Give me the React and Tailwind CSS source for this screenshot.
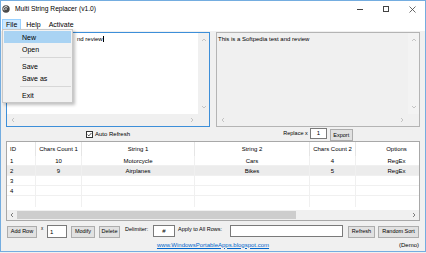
import React from 'react'

// small chevron used by the scrollbars
const Arrow = ({ dir, className = '' }) => {
  const pts = {
    up: '1,4 3,2 5,4',
    down: '1,2 3,4 5,2',
    left: '4,1 2,3 4,5',
    right: '2,1 4,3 2,5',
  }[dir]
  return (
    <svg width="6" height="6" viewBox="0 0 6 6" className={className}>
      <polyline points={pts} fill="none" stroke="currentColor" strokeWidth="0.8" />
    </svg>
  )
}

const TextBox = ({ focused, readOnly, children }) => (
  <div
    className={`relative w-[204px] h-[95px] border flex flex-col ${
      focused ? 'border-[#3d8fd9] bg-white' : 'border-[#b4b4b4] bg-[#f0f0f0]'
    }`}
  >
    <div className="flex flex-1">
      <div className="flex-1 pl-[1px] pt-[3px] text-[6px] leading-[7px] text-black whitespace-nowrap overflow-hidden">
        {children}
      </div>
      <div className={`w-[11px] flex flex-col items-center justify-between py-[4px] ${readOnly ? 'bg-[#f3f3f3]' : 'bg-[#f0f0f0]'} text-[#b8b8b8]`}>
        <Arrow dir="up" />
        <Arrow dir="down" />
      </div>
    </div>
    <div className="h-[12px] flex">
      <div className="flex-1 flex items-center justify-between px-[3px] bg-[#f0f0f0] text-[#b8b8b8]">
        <Arrow dir="left" />
        <Arrow dir="right" />
      </div>
      <div className="w-[11px] bg-[#f0f0f0]" />
    </div>
  </div>
)

const Btn = ({ w, className = '', children }) => (
  <div
    className={`${w} h-[12px] mt-[1px] bg-[#e1e1e1] border border-[#adadad] flex items-center justify-center text-[5.5px] text-black ${className}`}
  >
    {children}
  </div>
)

const cols = 'grid grid-cols-[29px_46px_113px_115px_46px_82px] w-[431px]'

const rows = [
  ['1', '10', 'Motorcycle', 'Cars', '4', 'RegEx'],
  ['2', '9', 'Airplanes', 'Bikes', '5', 'RegEx'],
  ['3', '', '', '', '', ''],
  ['4', '', '', '', '', ''],
]

const headers = ['ID', 'Chars Count 1', 'String 1', 'String 2', 'Chars Count 2', 'Options']

export default function App() {
  return (
    <div className="w-[426px] h-[253px] bg-[#f0f0f0] overflow-hidden font-['Liberation_Sans',Arial,sans-serif] text-black">
      <div className="relative w-[426px] h-[252px] border border-[#74ade0] bg-[#f0f0f0] flex flex-col">
        {/* title bar */}
        <div className="h-[16px] bg-white flex items-center">
          <svg width="8" height="8" viewBox="0 0 8 8" className="ml-[1px]">
            <circle cx="4" cy="4" r="3.7" fill="#4a4a4a" />
            <path d="M2.2 5.3 A2.2 2.2 0 0 1 5.6 2.4" fill="none" stroke="#fff" strokeWidth="0.9" />
            <circle cx="4" cy="4" r="0.8" fill="#fff" />
          </svg>
          <span className="ml-[5px] text-[6.7px] leading-none">Multi String Replacer (v1.0)</span>
          <div className="ml-auto flex h-full">
            <div className="w-[26px] flex items-center justify-center">
              <div className="w-[6px] h-[1px] bg-[#444]" />
            </div>
            <div className="w-[26px] flex items-center justify-center">
              <div className="w-[6px] h-[6px] border border-[#444]" />
            </div>
            <div className="w-[26px] flex items-center justify-center">
              <svg width="7" height="7" viewBox="0 0 7 7">
                <path d="M0.5 0.5 L6.5 6.5 M6.5 0.5 L0.5 6.5" stroke="#444" strokeWidth="0.8" />
              </svg>
            </div>
          </div>
        </div>

        {/* menu bar */}
        <div className="h-[14px] bg-white flex items-center text-[7px] leading-none">
          <div className="ml-[1px] h-[11px] px-[3px] flex items-center bg-[#cce8ff] border border-[#99d1ff]">File</div>
          <span className="ml-[5px]">Help</span>
          <span className="ml-[8px]">Activate</span>
        </div>

        {/* content */}
        <div className="flex-1 px-[5px] pt-[1px] flex flex-col">
          <div className="flex gap-[6px]">
            <TextBox focused>
              <span className="pl-[69px]">nd review</span>
              <span className="inline-block w-[0.5px] h-[6px] bg-black align-middle" />
            </TextBox>
            <TextBox readOnly>This is a Softpedia test and review</TextBox>
          </div>

          <div className="h-[14px] flex">
            <div className="w-[204px] flex items-center justify-center">
              <div className="w-[7px] h-[7px] border border-[#333] bg-white flex items-center justify-center">
                <svg width="5" height="5" viewBox="0 0 5 5">
                  <polyline points="0.6,2.6 1.9,3.9 4.4,1" fill="none" stroke="#222" strokeWidth="0.8" />
                </svg>
              </div>
              <span className="ml-[2px] text-[6px] leading-none">Auto Refresh</span>
            </div>
            <div className="ml-[6px] w-[204px] flex items-start justify-center pt-[1px]">
              <span className="mt-[3px] text-[5.5px] leading-none">Replace x</span>
              <div className="ml-[2px] w-[17px] h-[11px] bg-white border border-[#7a7a7a] flex items-center pl-[6px] text-[6px]">1</div>
              <Btn w="w-[23px]" className="ml-[3px]">Export</Btn>
            </div>
          </div>

          {/* list view */}
          <div className="h-[80px] border border-[#a8a8a8] bg-white flex flex-col overflow-hidden">
            <div className={`${cols} h-[14px] text-[6px] leading-none`}>
              {headers.map((h, i) => (
                <div
                  key={h}
                  className={`border-r border-[#e5e5e5] flex items-center ${i === 0 ? 'justify-start pl-[3px]' : 'justify-center'}`}
                >
                  {h}
                </div>
              ))}
            </div>
            {rows.map((r, ri) => (
              <div
                key={ri}
                className={`${cols} h-[10px] text-[6px] leading-none border-b border-[#f0f0f0] ${ri === 1 ? 'bg-[#ececec]' : ''}`}
              >
                {r.map((c, ci) => (
                  <div
                    key={ci}
                    className={`border-r border-[#f0f0f0] flex items-center ${ci === 0 ? 'justify-start pl-[3px]' : 'justify-center'}`}
                  >
                    {c}
                  </div>
                ))}
              </div>
            ))}
            <div className={`${cols} h-[14px]`}>
              {headers.map((h) => (
                <div key={h} className="border-r border-[#f0f0f0] mb-[3px]" />
              ))}
            </div>
            <div className="h-[10px] flex items-center bg-[#f0f0f0] text-[#606060]">
              <div className="w-[10px] flex justify-center"><Arrow dir="left" /></div>
              <div className="flex-1 h-full flex items-center">
                <div className="w-[279px] h-[8px] bg-[#cdcdcd]" />
              </div>
              <div className="w-[10px] flex justify-center"><Arrow dir="right" /></div>
            </div>
          </div>

          {/* action row */}
          <div className="mt-[4px] h-[13px] flex items-start text-[5.5px] leading-none">
            <Btn w="w-[30px]" className="ml-[1px]">Add Row</Btn>
            <span className="ml-[4px] mt-[2px] w-[3px] text-[4.5px]">x</span>
            <div className="ml-[3px] w-[20px] h-[13px] bg-white border border-[#7a7a7a] flex items-center pl-[2px] text-[6px]">1</div>
            <Btn w="w-[24px]" className="ml-[4px]">Modify</Btn>
            <Btn w="w-[21px]" className="ml-[4px]">Delete</Btn>
            <span className="ml-[5px] mt-[2px] w-[26px]">Delimiter:</span>
            <div className="ml-[2px] w-[22px] h-[12px] bg-white border border-[#7a7a7a] flex items-center justify-center text-[6px]">#</div>
            <span className="ml-[3px] mt-[2px] w-[50px]">Apply to All Rows:</span>
            <div className="ml-[2px] w-[113px] h-[12px] bg-white border border-[#7a7a7a]" />
            <Btn w="w-[27px]" className="ml-[5px]">Refresh</Btn>
            <Btn w="w-[41px]" className="ml-[3px]">Random Sort</Btn>
          </div>

          {/* footer */}
          <div className="h-[13px] grid grid-cols-[1fr_auto_1fr] items-center text-[6px] leading-none">
            <div />
            <span className="text-[#0066cc] underline">www.WindowsPortableApps.blogspot.com</span>
            <span className="justify-self-end mr-[1px]">(Demo)</span>
          </div>
        </div>

        {/* File dropdown */}
        <div className="absolute left-[1px] top-[28px] w-[71px] bg-[#f2f2f2] border border-[#c8c8c8] shadow-[2px_2px_3px_rgba(0,0,0,0.25)] py-[1px] text-[7px] leading-none">
          <div className="mx-[1px] h-[12px] flex items-center pl-[18px] bg-[#a9d3f3]">New</div>
          <div className="h-[12px] flex items-center pl-[19px]">Open</div>
          <div className="h-[5px] flex items-center pl-[17px] pr-[1px]"><div className="flex-1 h-[1px] bg-[#d7d7d7]" /></div>
          <div className="h-[12px] flex items-center pl-[19px]">Save</div>
          <div className="h-[12px] flex items-center pl-[19px]">Save as</div>
          <div className="h-[5px] flex items-center pl-[17px] pr-[1px]"><div className="flex-1 h-[1px] bg-[#d7d7d7]" /></div>
          <div className="h-[12px] flex items-center pl-[19px]">Exit</div>
        </div>
      </div>
    </div>
  )
}
